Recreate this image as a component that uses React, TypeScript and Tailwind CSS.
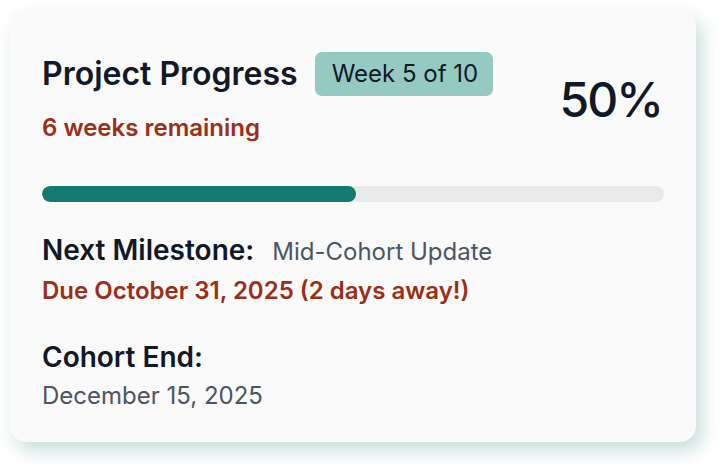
export default function App() {
  return (
    <div className="w-[726px] h-[473px] bg-white p-[10px] font-['Inter',sans-serif]">
      <div className="w-[686px] h-[432px] rounded-[16px] bg-[#fafafa] shadow-[6px_9px_18px_rgba(20,122,111,0.24)] px-[32px] pt-[42px]">
        <div className="flex items-center justify-between">
          <div className="flex flex-col">
            <div className="flex items-center gap-[17px]">
              <h1 className="text-[32px] font-semibold text-[#111827] leading-[44px]">Project Progress</h1>
              <span className="h-[44px] pl-[17px] pr-[15px] flex items-center rounded-[7px] bg-[#95cac3] text-[24px] text-[#111827]">Week 5 of 10</span>
            </div>
            <p className="mt-[18px] text-[24px] font-semibold text-[#9c2e18] leading-[28px]">6 weeks remaining</p>
          </div>
          <div className="text-[48px] font-medium text-[#111827] leading-none tracking-[-0.04em] pr-[2px] mt-[5px]">50%</div>
        </div>
        <div className="mt-[44px] h-[16px] w-full rounded-full bg-[#e9e9e9] overflow-hidden">
          <div className="h-full bg-[#147a6f] rounded-full" style={{ width: "50.5%" }} />
        </div>
        <div className="mt-[31px] flex items-baseline gap-[18px] leading-[34px]">
          <span className="text-[28px] font-semibold text-[#111827]">Next Milestone:</span>
          <span className="text-[24px] text-[#4b5563]">Mid-Cohort Update</span>
        </div>
        <p className="mt-[6px] text-[24px] leading-[32px] font-semibold text-[#9c2e18]">Due October 31, 2025 (2 days away!)</p>
        <p className="mt-[33px] text-[28px] leading-[34px] font-semibold text-[#111827]">Cohort End:</p>
        <p className="mt-[6px] text-[24px] leading-[32px] text-[#4b5563]">December 15, 2025</p>
      </div>
    </div>
  );
}
